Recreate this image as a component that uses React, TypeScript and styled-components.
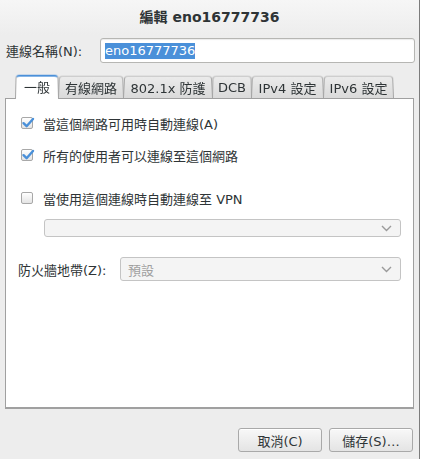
import React from "react";
import styled, { createGlobalStyle } from "styled-components";

const GlobalStyle = createGlobalStyle`
  html, body { margin: 0; padding: 0; background: #ffffff; }
  body { font-family: "DejaVu Sans", "Noto Sans CJK TC", sans-serif; font-size: 13px; color: #2e3436; }
  * { box-sizing: border-box; }
`;

const Window = styled.div`
  width: 420px;
  height: 459px;
  background: #ededed;
  border-right: 1px solid #7c7c7c;
  display: flex;
  flex-direction: column;
`;

const TitleBar = styled.div`
  height: 35px;
  display: flex;
  align-items: center;
  justify-content: center;
  padding-bottom: 4px;
  font-weight: bold;
  font-size: 14px;
  color: #2e3436;
  background: linear-gradient(#f6f6f6, #ededed);
`;

const NameRow = styled.div`
  margin-top: 3px;
  height: 25px;
  display: flex;
  align-items: center;
  padding: 0 4px 0 6px;
`;

const Label = styled.label<{ $width: number }>`
  width: ${(p) => p.$width}px;
  flex: none;
  white-space: nowrap;
`;

const TextInput = styled.div`
  flex: 1;
  height: 25px;
  background: #ffffff;
  border: 1px solid #b6b6b3;
  border-radius: 3px;
  box-shadow: inset 0 1px 1px rgba(0, 0, 0, 0.08);
  display: flex;
  align-items: center;
  padding-left: 4px;
`;

const Selected = styled.span`
  background: #4a90d9;
  color: #ffffff;
  line-height: 16px;
`;

const TabStrip = styled.div`
  margin-top: 11px;
  height: 24px;
  display: flex;
  align-items: flex-end;
  padding-left: 15px;
  position: relative;
  z-index: 1;
  isolation: isolate;
`;

const Tab = styled.div<{ $active?: boolean; $z: number; $width: number }>`
  position: relative;
  z-index: ${(p) => (p.$active ? 20 : p.$z)};
  width: ${(p) => p.$width}px;
  height: ${(p) => (p.$active ? 25 : 23)}px;
  margin-right: -1px;
  margin-bottom: ${(p) => (p.$active ? -1 : 0)}px;
  display: flex;
  align-items: center;
  justify-content: center;
  padding-top: ${(p) => (p.$active ? 0 : 1)}px;
  white-space: nowrap;
  color: #2e3436;
  font-size: 13px;
  &::before {
    content: "";
    position: absolute;
    inset: 0;
    z-index: -1;
    border: 1px solid #a6a6a6;
    border-bottom: none;
    border-top: ${(p) => (p.$active ? "2px solid #4a90d9" : "1px solid #bcbcbc")};
    border-radius: 4px 4px 0 0;
    background: ${(p) =>
      p.$active ? "#ffffff" : "linear-gradient(#ebebeb, #dadada)"};
    transform: perspective(60px) rotateX(4deg);
    transform-origin: bottom;
  }
`;

const Panel = styled.div`
  flex: 1;
  margin: 0 5px 0 5px;
  background: #ffffff;
  border: 1px solid #a0a0a0;
  border-bottom-width: 2px;
  display: flex;
  flex-direction: column;
  padding: 14px 12px 0 12px;
`;

const CheckRow = styled.div<{ $gap: number }>`
  margin-top: ${(p) => p.$gap}px;
  height: 20px;
  display: flex;
  align-items: center;
  gap: 10px;
  padding-left: 3px;
  white-space: nowrap;
`;

const Box = styled.span`
  width: 12px;
  height: 12px;
  flex: none;
  border: 1px solid #a8a8a8;
  border-radius: 2px;
  background: linear-gradient(#ffffff, #e4e4e4);
  position: relative;
  svg { position: absolute; left: -1px; top: -2px; }
`;

const Combo = styled.div<{ $height: number }>`
  height: ${(p) => p.$height}px;
  background: #f4f4f4;
  border: 1px solid #c4c4c4;
  border-radius: 3px;
  display: flex;
  align-items: center;
  justify-content: space-between;
  padding: 0 8px 0 7px;
  color: #a0a0a0;
`;

const VpnCombo = styled(Combo)`
  margin: 11px 0 0 26px;
`;

const FieldRow = styled.div`
  margin-top: 20px;
  display: flex;
  align-items: center;
`;

const ComboField = styled(Combo)`
  flex: 1;
`;

const Footer = styled.div`
  padding: 19px 6px 7px 0;
  display: flex;
  justify-content: flex-end;
  gap: 7px;
`;

const Button = styled.button`
  width: 84px;
  height: 24px;
  border: 1px solid #a9a9a9;
  border-radius: 3px;
  background: linear-gradient(#f8f8f8, #e4e4e4);
  font-family: inherit;
  font-size: 13px;
  color: #2e3436;
  padding: 0;
  box-shadow: inset 0 1px 0 #ffffff;
`;

const Chevron = () => (
  <svg width="11" height="7" viewBox="0 0 11 7">
    <path d="M1 1 L5.5 5.5 L10 1" fill="none" stroke="#9a9a9a" strokeWidth="1.4" />
  </svg>
);

const Check = () => (
  <svg width="14" height="14" viewBox="0 0 14 14">
    <path d="M2.5 7.2 L5.6 10.2 L12 3" fill="none" stroke="#4a90d9" strokeWidth="2.4" strokeLinecap="round" strokeLinejoin="round" />
  </svg>
);

const CheckItem = ({ gap, checked, children }: { gap: number; checked?: boolean; children: React.ReactNode }) => (
  <CheckRow $gap={gap}>
    <Box>{checked && <Check />}</Box>
    <span>{children}</span>
  </CheckRow>
);

const tabs: [string, number][] = [
  ["一般", 44],
  ["有線網路", 66],
  ["802.1x 防護", 90],
  ["DCB", 40],
  ["IPv4 設定", 73],
  ["IPv6 設定", 71],
];

export default function App() {
  return (
    <>
      <GlobalStyle />
      <Window>
        <TitleBar>編輯 eno16777736</TitleBar>
        <NameRow>
          <Label $width={94}>連線名稱(N):</Label>
          <TextInput>
            <Selected>eno16777736</Selected>
          </TextInput>
        </NameRow>
        <TabStrip>
          {tabs.map(([t, w], i) => (
            <Tab key={t} $active={i === 0} $z={10 - i} $width={w}>
              {t}
            </Tab>
          ))}
        </TabStrip>
        <Panel>
          <CheckItem gap={0} checked>當這個網路可用時自動連線(A)</CheckItem>
          <CheckItem gap={12} checked>所有的使用者可以連線至這個網路</CheckItem>
          <CheckItem gap={23}>當使用這個連線時自動連線至 VPN</CheckItem>
          <VpnCombo $height={18}>
            <span />
            <Chevron />
          </VpnCombo>
          <FieldRow>
            <Label $width={102}>防火牆地帶(Z):</Label>
            <ComboField $height={24}>
              <span>預設</span>
              <Chevron />
            </ComboField>
          </FieldRow>
        </Panel>
        <Footer>
          <Button>取消(C)</Button>
          <Button>儲存(S)…</Button>
        </Footer>
      </Window>
    </>
  );
}
